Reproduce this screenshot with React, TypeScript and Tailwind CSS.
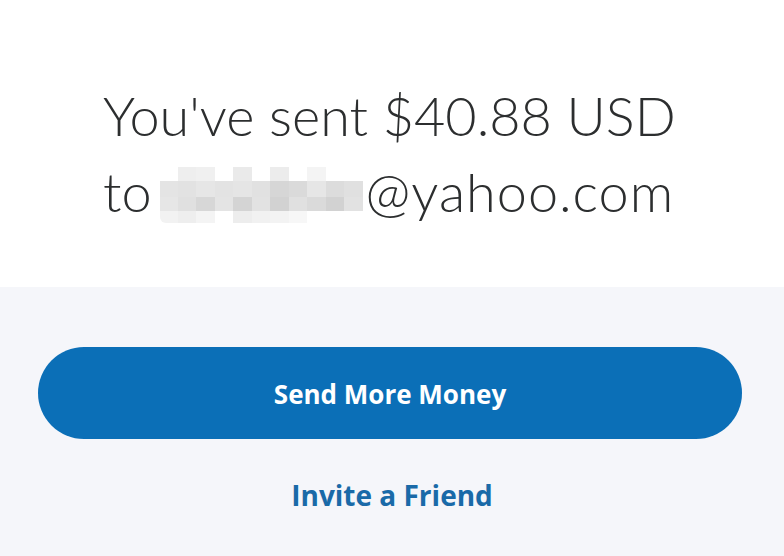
import React from 'react';

// pixelated, blurred-out part of the address
const blur = [
  ['#ffffff', '#eeeeee', '#f0f0f0', '#ffffff', '#eaeaea', '#ffffff', '#ececec', '#ffffff', '#f4f4f4', '#ffffff', '#ffffff'],
  ['#e4e4e4', '#e2e2e2', '#e6e6e6', '#e3e3e3', '#e5e5e5', '#e1e1e1', '#d6d6d6', '#dadada', '#e6e6e6', '#dcdcdc', '#e0e0e0'],
  ['#e6e6e6', '#e0e0e0', '#d7d7d7', '#e4e4e4', '#d4d4d4', '#e2e2e2', '#d2d2d2', '#e0e0e0', '#dadada', '#d2d2d2', '#e2e2e2'],
  ['#f2f2f2', '#eeeeee', '#f4f4f4', '#ffffff', '#ededed', '#f1f1f1', '#f3f3f3', '#f7f7f7', '#ffffff', '#ffffff', '#ffffff'],
];

export default function App() {
  return (
    <div className="w-[784px] h-[556px] overflow-hidden flex flex-col font-['Lato','Open_Sans',sans-serif]">
      <div className="h-[287px] bg-white flex items-start pt-[78px] pl-[103px]">
        <h1 className="text-[54px] leading-[76px] font-light text-[#2c2e2f]">
          <span className="block">You've sent $40.88 USD</span>
          <span className="flex items-center">
            to
            <span className="ml-[8px] mr-[3px] w-[203px] h-[56px] mt-[6px] grid grid-cols-11 grid-rows-[14px_16px_14px_12px] rounded-[6px] overflow-hidden">
              {blur.flat().map((c, i) => (
                <span key={i} style={{ backgroundColor: c }} />
              ))}
            </span>
            <span className="tracking-[1px]">@yahoo.com</span>
          </span>
        </h1>
      </div>
      <div className="flex-1 bg-[#f5f6fa] flex flex-col items-center pt-[60px]">
        <button className="ml-[-4px] w-[704px] h-[92px] rounded-full bg-[#0b6fb7] text-white text-[26px] font-bold font-['Open_Sans',sans-serif] pt-[2px]">
          Send More Money
        </button>
        <button className="mt-[35px] text-[#1a6aa8] text-[28px] font-bold font-['Open_Sans',sans-serif]">
          Invite a Friend
        </button>
      </div>
    </div>
  );
}
